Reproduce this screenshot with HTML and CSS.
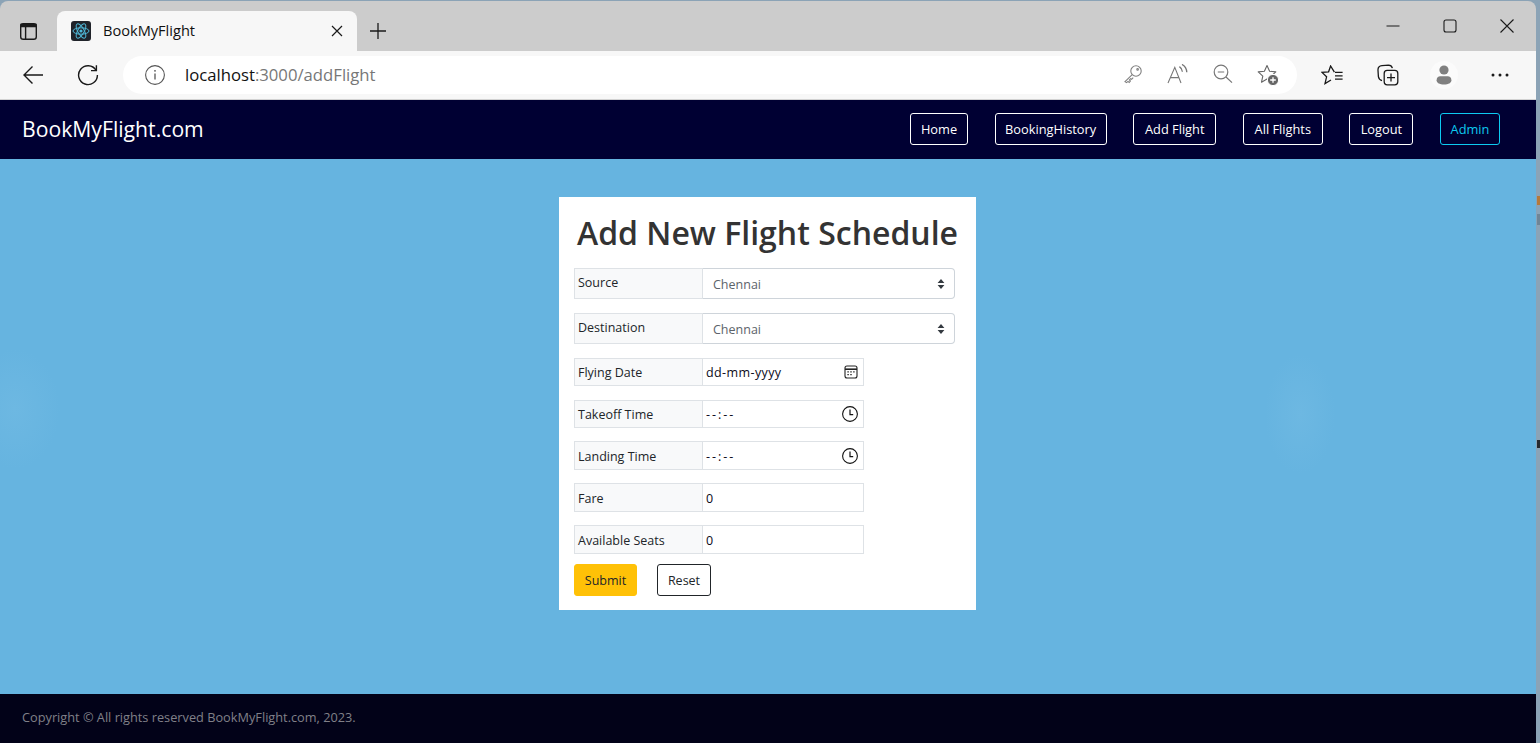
FILE: index.html
```html
<!DOCTYPE html>

<html lang="en">
<head>
    <title>BookMyFlight</title>
    <link rel="stylesheet" href="styles.css">
</head>

<body>
<div class="window">

    <div class="tabstrip">
        <div class="tab-toggle">
            <svg width="20" height="20" viewBox="0 0 20 20" fill="none" stroke="#1a1a1a" stroke-width="1.4"><rect x="2.7" y="2.7" width="15.6" height="15.6" rx="2.6"/><path d="M3 5.6h15V3.4H3z" fill="#1a1a1a"/><path d="M7.6 6v12"/></svg>
        </div>
        <div class="tab">
            <span class="favicon">
                <svg width="20" height="20" viewBox="0 0 20 20" fill="none" stroke="#4fb8d8" stroke-width="1"><ellipse cx="10" cy="10" rx="8" ry="3.2"/><ellipse cx="10" cy="10" rx="8" ry="3.2" transform="rotate(60 10 10)"/><ellipse cx="10" cy="10" rx="8" ry="3.2" transform="rotate(120 10 10)"/><circle cx="10" cy="10" r="1.6" fill="#4fb8d8" stroke="none"/></svg>
            </span>
            <span class="tab-title">BookMyFlight</span>
            <svg class="tab-close" width="12" height="12" viewBox="0 0 12 12" stroke="#1a1a1a" stroke-width="1.2"><path d="M1 1l10 10M11 1L1 11"/></svg>
        </div>
        <div class="new-tab">
            <svg width="18" height="18" viewBox="0 0 18 18" stroke="#1a1a1a" stroke-width="1.3"><path d="M9 1v16M1 9h16"/></svg>
        </div>
        <div class="window-controls">
            <div class="window-btn"><svg width="14" height="14" viewBox="0 0 14 14" stroke="#1a1a1a" stroke-width="1.1"><path d="M0.5 7h13"/></svg></div>
            <div class="window-btn"><svg width="14" height="14" viewBox="0 0 14 14" fill="none" stroke="#1a1a1a" stroke-width="1.1"><rect x="1" y="1" width="12" height="12" rx="2"/></svg></div>
            <div class="window-btn"><svg width="14" height="14" viewBox="0 0 14 14" stroke="#1a1a1a" stroke-width="1.1"><path d="M0.5 0.5l13 13M13.5 0.5l-13 13"/></svg></div>
        </div>
    </div>

    <div class="toolbar">
        <div class="tool-btn">
            <svg width="22" height="20" viewBox="0 0 22 20" fill="none" stroke="#1a1a1a" stroke-width="1.4"><path d="M21 10H2M10.5 1.5L2 10l8.5 8.5"/></svg>
        </div>
        <div class="tool-btn">
            <svg width="22" height="22" viewBox="0 0 22 22" fill="none" stroke="#1a1a1a" stroke-width="1.4"><path d="M19 6.2A9.4 9.4 0 1 0 20.4 11"/><path d="M19.4 1.2v5.4H14"/></svg>
        </div>
        <div class="address">
            <svg class="address-info" width="20" height="20" viewBox="0 0 20 20" fill="none" stroke="#555" stroke-width="1.1"><circle cx="10" cy="10" r="9.4"/><path d="M10 8.6v6" stroke-width="1.3"/><circle cx="10" cy="5.8" r="0.9" fill="#555" stroke="none"/></svg>
            <span class="url"><span class="url-host">localhost</span>:3000/addFlight</span>
            <div class="address-icons">
                <div class="address-icon"><svg width="20" height="20" viewBox="0 0 20 20" fill="none" stroke="#808080" stroke-width="1.1"><circle cx="13" cy="7" r="5.2"/><path d="M9.2 10.6L2 17.6l1.6 1 1.4-1.2 1.2 1 1.2-1.4-1-1.1 1.2-1.2 1 .6 1.6-1.7"/><circle cx="14.6" cy="5.4" r="0.8"/></svg></div>
                <div class="address-icon"><svg width="22" height="20" viewBox="0 0 22 20" fill="none" stroke="#777" stroke-width="1.1"><path d="M1 19L7.8 3.4 14 19M3.4 13.6h8.8"/><path d="M12.4 2.6c1.6 1 2.8 3 3 5.2M15 .4c2.6 1.4 4.6 4.4 4.8 7.8" stroke-width="1.3"/></svg></div>
                <div class="address-icon"><svg width="20" height="20" viewBox="0 0 20 20" fill="none" stroke="#777" stroke-width="1.2"><circle cx="8" cy="8" r="6.8"/><path d="M4.8 8h6.4M13 13l6 5.6"/></svg></div>
                <div class="address-icon"><svg width="22" height="22" viewBox="0 0 22 22" fill="none" stroke="#666" stroke-width="1.1"><path d="M10 1.5l2.6 5.7 6.2.7-4.6 4.2 1.3 6.1-5.5-3.1-5.5 3.1 1.3-6.1-4.6-4.2 6.2-.7z" stroke-linejoin="round"/><circle cx="16" cy="16" r="5.6" fill="#666" stroke="#fff" stroke-width="1"/><path d="M16 13.2v5.6M13.2 16h5.6" stroke="#fff" stroke-width="1.3"/></svg></div>
            </div>
        </div>
        <div class="tool-group">
            <div class="tool-item"><svg width="22" height="20" viewBox="0 0 22 20" fill="none" stroke="#1a1a1a" stroke-width="1.3"><path d="M14 7.4h7.6M14 10.8h7.6M14 14.2h7.6"/><path d="M13.4 7.2L9.6 1 7.6 6.8 1 7.4l4.6 4.4L4 18.6l6-3.6"/></svg></div>
            <div class="tool-item"><svg width="22" height="22" viewBox="0 0 22 22" fill="none" stroke="#1a1a1a" stroke-width="1.3"><path d="M5 16.6C3 16 1.6 14.4 1.4 12.6L1 6.4C.8 3.6 2.6 1.8 5 1.6l6.4-.4c1.6 0 3.4.8 4 3"/><rect x="7.2" y="6.4" width="13.6" height="14.4" rx="3"/><path d="M14 9.6v8M10 13.6h8"/></svg></div>
            <div class="tool-item">
                <span class="avatar">
                    <svg width="16" height="20" viewBox="0 0 16 20" fill="#808080"><circle cx="8" cy="5" r="4.6"/><path d="M0.6 15.2c0-2.6 1.6-4 3.6-4h7.6c2 0 3.6 1.4 3.6 4 0 2.8-3 4.2-7.4 4.2S0.6 18 0.6 15.2z"/></svg>
                </span>
            </div>
            <div class="tool-item"><svg width="18" height="4" viewBox="0 0 18 4" fill="#1a1a1a"><circle cx="2" cy="2" r="1.5"/><circle cx="9" cy="2" r="1.5"/><circle cx="16" cy="2" r="1.5"/></svg></div>
        </div>
    </div>

    <nav class="navbar">
        <a class="brand">BookMyFlight.com</a>
        <div class="nav-links">
            <button type="button" class="nav-btn">Home</button>
            <button type="button" class="nav-btn">BookingHistory</button>
            <button type="button" class="nav-btn">Add Flight</button>
            <button type="button" class="nav-btn">All Flights</button>
            <button type="button" class="nav-btn">Logout</button>
            <button type="button" class="nav-btn nav-btn-info">Admin</button>
        </div>
    </nav>

    <main class="content">
        <form class="card">
            <h1 class="card-title">Add New Flight Schedule</h1>

            <div class="row row-tall">
                <label class="row-label row-label-top" for="source">Source</label>
                <div class="row-field row-field-select">
                    <select id="source" class="picker"><option>Chennai</option></select>
                    <svg class="picker-arrows" width="8" height="10" viewBox="0 0 8 10" fill="#343a40"><path d="M4 0l3.4 4H.6zM4 10L.6 6h6.8z"/></svg>
                </div>
            </div>

            <div class="row row-tall">
                <label class="row-label row-label-top" for="destination">Destination</label>
                <div class="row-field row-field-select">
                    <select id="destination" class="picker"><option>Chennai</option></select>
                    <svg class="picker-arrows" width="8" height="10" viewBox="0 0 8 10" fill="#343a40"><path d="M4 0l3.4 4H.6zM4 10L.6 6h6.8z"/></svg>
                </div>
            </div>

            <div class="row row-short row-gap-wide">
                <label class="row-label" for="flyingDate">Flying Date</label>
                <div class="row-field">
                    <input id="flyingDate" class="text-input" type="text" value="dd-mm-yyyy">
                    <svg class="date-icon" width="14" height="14" viewBox="0 0 14 14" fill="none" stroke="#222" stroke-width="1.1"><rect x="1" y="1" width="12" height="12" rx="2"/><path d="M1 4.2h12" stroke-width="1.6"/><path d="M3.4 6.8h1.4M6.3 6.8h1.4M9.2 6.8h1.4M3.4 9.6h1.4M6.3 9.6h1.4" stroke-width="1.3"/></svg>
                </div>
            </div>

            <div class="row row-short">
                <label class="row-label" for="takeoffTime">Takeoff Time</label>
                <div class="row-field">
                    <input id="takeoffTime" class="text-input time-input" type="text" value="--:--">
                    <svg class="time-icon" width="16" height="16" viewBox="0 0 16 16" fill="none" stroke="#111" stroke-width="1.1"><circle cx="8" cy="8" r="7.4"/><path d="M8 3.6V8.6h3.2" stroke-width="1.2"/></svg>
                </div>
            </div>

            <div class="row">
                <label class="row-label" for="landingTime">Landing Time</label>
                <div class="row-field">
                    <input id="landingTime" class="text-input time-input" type="text" value="--:--">
                    <svg class="time-icon" width="16" height="16" viewBox="0 0 16 16" fill="none" stroke="#111" stroke-width="1.1"><circle cx="8" cy="8" r="7.4"/><path d="M8 3.6V8.6h3.2" stroke-width="1.2"/></svg>
                </div>
            </div>

            <div class="row">
                <label class="row-label" for="fare">Fare</label>
                <div class="row-field">
                    <input id="fare" class="text-input" type="text" value="0">
                </div>
            </div>

            <div class="row row-last">
                <label class="row-label" for="seats">Available Seats</label>
                <div class="row-field">
                    <input id="seats" class="text-input" type="text" value="0">
                </div>
            </div>

            <div class="form-actions">
                <button type="button" class="btn btn-submit">Submit</button>
                <button type="reset" class="btn btn-reset">Reset</button>
            </div>
        </form>
    </main>

    <footer class="footer">Copyright © All rights reserved BookMyFlight.com, 2023.</footer>
</div>

<!-- bits of the window behind, showing at the right edge -->
<span class="behind behind-orange"></span>
<span class="behind behind-grey"></span>
<span class="behind behind-dark"></span>
</body>
</html>
```

FILE: styles.css
```css
html, body {
    height: 100%;
}
body {
    margin: 0;
    background-color: #8ba3b6;
    font-family: "Open Sans", "Noto Sans", sans-serif;
    font-size: 13px;
    overflow: hidden;
}
svg {
    display: block;
    flex: none;
}
.window {
    width: 1536px;
    height: 742px;
    margin-top: 1px;
    display: flex;
    flex-direction: column;
    border-radius: 8px 8px 0 0;
    overflow: hidden;
}
.behind {
    position: absolute;
    left: 1537px;
    width: 3px;
}
.behind-orange {
    top: 196px;
    height: 9px;
    background-color: #b5793a;
}
.behind-grey {
    top: 214px;
    height: 11px;
    background-color: #6f8596;
}
.behind-dark {
    top: 440px;
    height: 8px;
    background-color: #26292e;
}

/* browser chrome */
.tabstrip {
    height: 50px;
    flex: none;
    display: flex;
    align-items: flex-end;
    background-color: #cccccc;
}
.tab-toggle {
    width: 57px;
    height: 40px;
    box-sizing: border-box;
    padding-right: 2px;
    display: flex;
    align-items: center;
    justify-content: center;
}
.tab {
    width: 300px;
    height: 40px;
    box-sizing: border-box;
    padding: 0 14px;
    display: flex;
    align-items: center;
    background-color: #f7f7f7;
    border-radius: 8px 8px 0 0;
}
.favicon {
    width: 20px;
    height: 20px;
    background-color: #20232a;
    border-radius: 3px;
}
.tab-title {
    margin-left: 12px;
    padding-bottom: 2px;
    flex: 1;
    font-size: 14.6px;
    color: #111;
}
.new-tab {
    width: 42px;
    height: 40px;
    display: flex;
    align-items: center;
    justify-content: center;
}
.window-controls {
    margin-left: auto;
    margin-right: 1px;
    align-self: stretch;
    display: flex;
}
.window-btn {
    width: 57px;
    height: 50px;
    display: flex;
    align-items: center;
    justify-content: center;
}
.toolbar {
    height: 49px;
    flex: none;
    box-sizing: border-box;
    padding: 5px 8px 5px 5px;
    display: flex;
    align-items: center;
    background-color: #f7f7f7;
    border-bottom: 1px solid #d2d2d2;
}
.tool-btn {
    width: 55px;
    display: flex;
    justify-content: center;
}
.address {
    flex: 1;
    height: 38px;
    margin: 0 7px 0 8px;
    padding-left: 22px;
    display: flex;
    align-items: center;
    background-color: #fff;
    border-radius: 19px;
}
.url {
    margin-left: 20px;
    padding-bottom: 2px;
    font-size: 16.7px;
    color: #777;
}
.url-host {
    color: #111;
}
.address-icons {
    margin-left: auto;
    margin-right: 7px;
    display: flex;
}
.address-icon {
    width: 45px;
    display: flex;
    justify-content: center;
}
.tool-group {
    display: flex;
    align-items: center;
}
.tool-item {
    width: 56px;
    display: flex;
    justify-content: center;
}
.avatar {
    width: 28px;
    height: 28px;
    display: flex;
    align-items: center;
    justify-content: center;
    background-color: #fbfbfb;
    border-radius: 50%;
}

/* app */
.navbar {
    height: 59px;
    flex: none;
    box-sizing: border-box;
    padding: 0 36px 2px 22px;
    display: flex;
    align-items: center;
    justify-content: space-between;
    background-color: #000033;
}
.brand {
    font-size: 21.2px;
    color: #fff;
}
.nav-links {
    display: grid;
    grid-template-columns: 58px 112px 83px 80px 64px 60px;
    column-gap: 26.6px;
}
.nav-btn {
    height: 32px;
    padding: 0;
    font-family: inherit;
    font-size: 12.8px;
    color: #fff;
    background: none;
    border: 1px solid #fff;
    border-radius: 3px;
}
.nav-btn-info {
    color: #0dcaf0;
    border-color: #0dcaf0;
}
.content {
    flex: 1;
    display: flex;
    justify-content: center;
    align-items: flex-start;
    padding: 38px 1px 0 0;
    background-color: #66b4e0;
    background-image:
        radial-gradient(ellipse 45px 60px at 15px 250px, #6db8e2, transparent),
        radial-gradient(ellipse 35px 60px at 1300px 255px, #6db8e2, transparent);
}
.card {
    width: 417px;
    box-sizing: border-box;
    padding: 0 21px 14px 15px;
    background-color: #fff;
}
.card-title {
    height: 71px;
    margin: 0;
    padding-left: 3px;
    font-size: 32px;
    font-weight: 600;
    line-height: 72px;
    white-space: nowrap;
    color: #333;
}
.row {
    height: 29px;
    margin-bottom: 13px;
    width: 290px;
    display: flex;
    box-sizing: border-box;
}
.row-tall {
    height: 31px;
    margin-bottom: 14px;
    width: 100%;
}
.row-short {
    height: 28px;
}
.row-gap-wide {
    margin-bottom: 14px;
}
.row-last {
    margin-bottom: 10px;
}
.row-label {
    width: 129px;
    flex: none;
    box-sizing: border-box;
    padding: 1px 0 0 3px;
    display: flex;
    align-items: center;
    font-size: 12.5px;
    color: #212529;
    background-color: #f8f9fa;
    border: 1px solid #dee2e6;
}
.row-short .row-label {
    padding-top: 0;
}
.row-label-top {
    padding-top: 0;
    padding-bottom: 3px;
}
.row-field {
    flex: 1;
    min-width: 0;
    box-sizing: border-box;
    padding-right: 5px;
    display: flex;
    align-items: center;
    border: 1px solid #dee2e6;
    border-left: none;
}
.row-field-select {
    padding-right: 9px;
    border-color: #ced4da;
    border-radius: 0 4px 4px 0;
}
.picker {
    flex: 1;
    min-width: 0;
    height: 100%;
    padding: 1px 0 0 10px;
    font-family: inherit;
    font-size: 12.5px;
    color: #5c636a;
    background: none;
    border: none;
    appearance: none;
}
.text-input {
    flex: 1;
    min-width: 0;
    padding: 1px 0 0 3px;
    font-family: inherit;
    font-size: 12.5px;
    letter-spacing: 0.4px;
    color: #0b0b20;
    background: none;
    border: none;
}
.row-short .text-input {
    padding-top: 0;
}
.time-input {
    letter-spacing: 2px;
}
.form-actions {
    display: flex;
    gap: 20px;
}
.btn {
    height: 32px;
    font-family: inherit;
    font-size: 12.5px;
    color: #212529;
    border-radius: 3px;
}
.btn-submit {
    width: 63px;
    background-color: #ffc107;
    border: 1px solid #ffc107;
}
.btn-reset {
    width: 54px;
    background-color: #fff;
    border: 1px solid #212529;
}
.footer {
    height: 49px;
    flex: none;
    box-sizing: border-box;
    padding: 14px 0 0 22px;
    font-size: 12.75px;
    color: #808088;
    background-color: #020218;
}
```
